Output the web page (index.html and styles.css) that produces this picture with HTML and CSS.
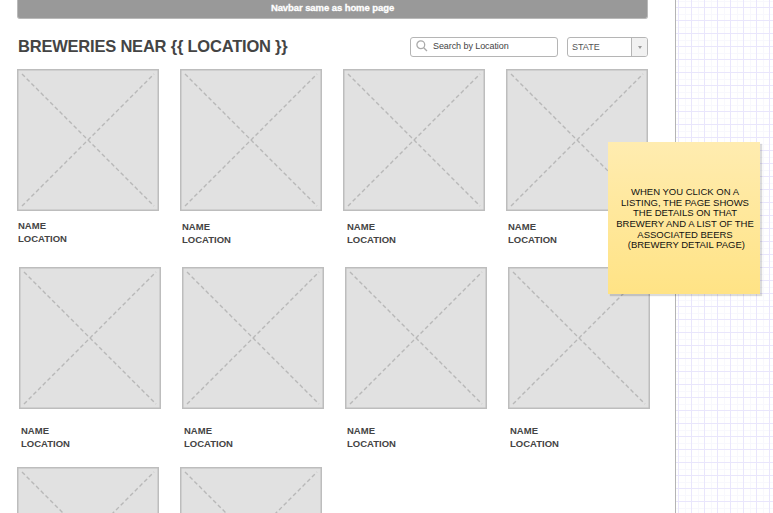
FILE: index.html
```
<!DOCTYPE html>
<html lang="en">
<head>
<meta charset="utf-8">
<title>Breweries</title>
<link rel="stylesheet" href="styles.css">
</head>
<body>
<svg width="0" height="0" class="defs">
  <symbol id="ph" viewBox="0 0 142 142">
    <rect x="0.75" y="0.75" width="140.5" height="140.5" fill="#e1e1e1" stroke="#bdbdbd" stroke-width="1.5"/>
    <path d="M5 5L137 137M5 137L137 5" fill="none" stroke="#b8b8b8" stroke-width="1.4" stroke-dasharray="4 2.65"/>
  </symbol>
</svg>
<main class="page">
  <nav class="navbar">Navbar same as home page</nav>
  <header class="head">
    <h1 class="title">BREWERIES NEAR {{ LOCATION }}</h1>
    <div class="search">
      <svg class="lens" viewBox="0 0 12 12"><circle cx="4.8" cy="4.8" r="3.9"/><path d="M7.7 7.7L11 11"/></svg>
      <span>Search by Location</span>
    </div>
    <div class="select"><span class="value">STATE</span><span class="drop"><i class="caret"></i></span></div>
  </header>
  <section class="row first">
    <article class="card lead"><svg class="pic"><use href="#ph"/></svg><p class="label">NAME<br>LOCATION</p></article>
    <article class="card"><svg class="pic"><use href="#ph"/></svg><p class="label">NAME<br>LOCATION</p></article>
    <article class="card third"><svg class="pic"><use href="#ph"/></svg><p class="label">NAME<br>LOCATION</p></article>
    <article class="card"><svg class="pic"><use href="#ph"/></svg><p class="label">NAME<br>LOCATION</p></article>
  </section>
  <section class="row second">
    <article class="card"><svg class="pic"><use href="#ph"/></svg><p class="label">NAME<br>LOCATION</p></article>
    <article class="card"><svg class="pic"><use href="#ph"/></svg><p class="label">NAME<br>LOCATION</p></article>
    <article class="card"><svg class="pic"><use href="#ph"/></svg><p class="label">NAME<br>LOCATION</p></article>
    <article class="card"><svg class="pic"><use href="#ph"/></svg><p class="label">NAME<br>LOCATION</p></article>
  </section>
  <section class="row">
    <article class="card"><svg class="pic"><use href="#ph"/></svg></article>
    <article class="card"><svg class="pic"><use href="#ph"/></svg></article>
  </section>
</main>
<aside class="note"><p class="note-text">WHEN YOU CLICK ON A<br>LISTING, THE PAGE SHOWS<br>THE DETAILS ON THAT<br>BREWERY AND A LIST OF THE<br>ASSOCIATED BEERS<br>&nbsp;(BREWERY DETAIL PAGE)</p></aside>
</body>
</html>
```
FILE: styles.css
```
* { box-sizing: border-box; margin: 0; }
html { height: 100%; overflow: hidden; }
body {
  position: relative;
  height: 513px;
  overflow: hidden;
  font-family: "Liberation Sans", Arial, sans-serif;
  background-color: #fff;
  background-image:
    linear-gradient(to right, #e9e6fc 1px, transparent 1px),
    linear-gradient(to bottom, #e9e6fc 1px, transparent 1px),
    linear-gradient(to right, #f8f8fd 1px, transparent 1px),
    linear-gradient(to bottom, #f8f8fd 1px, transparent 1px);
  background-size: 13px 13px;
  background-position: 2px 0, 0 7px, 9px 0, 0 1px;
}
.defs { position: absolute; }
.page {
  width: 676px;
  height: 513px;
  padding-left: 17px;
  overflow: hidden;
  background: #fff;
  border-right: 1px solid #b4b4b4;
}
.navbar {
  width: 631px;
  height: 19px;
  margin-bottom: 17px;
  border: 1px solid #b9b9b9;
  border-top: 0;
  border-radius: 0 0 3px 3px;
  background: #999;
  color: #fff;
  font-size: 9.5px;
  font-weight: bold;
  line-height: 15px;
  text-align: center;
  letter-spacing: -0.08px;
  -webkit-text-stroke: 0.3px #fff;
}
.head { display: flex; width: 631px; height: 33px; }
.title {
  width: 393px;
  padding-left: 1px;
  color: #444;
  font-size: 16.5px;
  letter-spacing: -0.21px;
  line-height: 21px;
  white-space: nowrap;
}
.search {
  display: flex;
  align-items: center;
  width: 148px;
  height: 20px;
  margin: 1px 9px 0 0;
  padding: 0 0 2px 5px;
  border: 1px solid #b5b5b5;
  border-radius: 3px;
  color: #444;
  font-size: 9px;
  letter-spacing: -0.08px;
}
.lens { width: 12px; height: 12px; margin-right: 5px; fill: none; stroke: #aaa; stroke-width: 1.3; }
.select {
  display: flex;
  width: 81px;
  height: 20px;
  margin-top: 1px;
  border: 1px solid #b5b5b5;
  border-radius: 3px;
  color: #555;
  font-size: 9px;
  line-height: 19px;
  overflow: hidden;
}
.value { flex: 1; padding-left: 4px; }
.drop {
  display: flex;
  align-items: center;
  justify-content: center;
  width: 16px;
  border-left: 1px solid #b5b5b5;
  background: #f1f1f1;
}
.caret { border: 2.5px solid transparent; border-top: 3px solid #999; border-bottom: 0; }
.row { display: flex; gap: 21px; }
.card { flex: none; width: 142px; }
.pic { display: block; width: 142px; height: 142px; }
.label {
  padding: 9px 0 0 2px;
  color: #444;
  font-size: 9.5px;
  font-weight: bold;
  line-height: 13px;
}
.first { height: 198px; }
.lead .label { padding: 8px 0 0 1px; }
.third .label { padding-left: 4px; }
.second { height: 200px; padding-left: 2px; }
.second .label { padding-top: 15px; }
.note {
  position: absolute;
  left: 608px;
  top: 142px;
  display: flex;
  align-items: center;
  justify-content: center;
  width: 152px;
  height: 152px;
  padding: 2px 0 0 2px;
  background: linear-gradient(#ffecb0, #ffe385);
  box-shadow: 2px 2px 1px rgba(0, 0, 0, 0.14);
}
.note-text {
  color: #111;
  font-size: 9.5px;
  line-height: 10.7px;
  text-align: center;
  white-space: nowrap;
}
```
